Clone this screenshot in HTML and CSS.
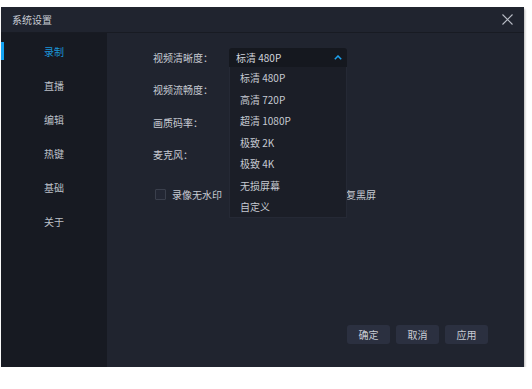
FILE: index.html
```html
<!DOCTYPE html>
<html lang="zh">
<head>
<meta charset="utf-8">
<link rel="stylesheet" href="styles.css">
</head>
<body>
<div class="dialog">
  <div class="titlebar">
    <span class="title">系统设置</span>
    <span class="close">
      <svg width="11" height="11" viewBox="0 0 11 11"><path d="M0.5 0.5 L10.5 10.5 M10.5 0.5 L0.5 10.5" stroke="#b9bdc6" stroke-width="1.1" fill="none"/></svg>
    </span>
  </div>
  <div class="content">
    <nav class="sidebar">
      <div class="nav-item active">录制</div>
      <div class="nav-item">直播</div>
      <div class="nav-item">编辑</div>
      <div class="nav-item">热键</div>
      <div class="nav-item">基础</div>
      <div class="nav-item">关于</div>
    </nav>
    <main class="main">
      <div class="form">
        <div class="row">
          <span class="label">视频清晰度：</span>
          <div class="select-wrap">
            <div class="select">
              <span>标清 480P</span>
              <svg class="chev" width="8" height="5" viewBox="0 0 8 5"><path d="M0.8 4.2 L4 1 L7.2 4.2" stroke="#1ea2ee" stroke-width="1.5" fill="none"/></svg>
            </div>
            <ul class="menu">
              <li>标清 480P</li>
              <li>高清 720P</li>
              <li>超清 1080P</li>
              <li>极致 2K</li>
              <li>极致 4K</li>
              <li>无损屏幕</li>
              <li>自定义</li>
            </ul>
          </div>
        </div>
        <div class="row"><span class="label">视频流畅度：</span></div>
        <div class="row"><span class="label">画质码率：</span></div>
        <div class="row"><span class="label">麦克风：</span></div>
        <div class="checks">
          <label class="check"><span class="box"></span>录像无水印</label>
          <label class="check second"><span class="box"></span>修复黑屏</label>
        </div>
      </div>
      <div class="actions">
        <button class="btn">确定</button>
        <button class="btn">取消</button>
        <button class="btn">应用</button>
      </div>
    </main>
  </div>
</div>
</body>
</html>
```
FILE: styles.css
```css
html, body {
  margin: 0;
  padding: 0;
  background: #ffffff;
}
body {
  font-family: "Noto Sans CJK SC", "Noto Sans", sans-serif;
  font-size: 10px;
  color: #c6cad2;
}
.dialog {
  margin: 7px 0 0 1px;
  width: 523px;
  height: 360px;
  display: flex;
  flex-direction: column;
  background: #20242f;
  box-shadow: 1px 2px 2px rgba(0, 0, 0, 0.28);
}
.titlebar {
  height: 25px;
  flex: none;
  display: flex;
  align-items: center;
  justify-content: space-between;
  padding: 0 10px 0 11px;
  background: #20242f;
  border-bottom: 1px solid #181b23;
}
.title {
  color: #c8ccd4;
  font-size: 10px;
}
.close {
  display: flex;
  margin-right: 1px;
}
.content {
  flex: 1;
  display: flex;
  min-height: 0;
}
.sidebar {
  width: 106px;
  flex: none;
  background: #171a22;
  padding-top: 1px;
}
.nav-item {
  position: relative;
  height: 34px;
  display: flex;
  align-items: center;
  justify-content: center;
  color: #bcc0c8;
}
.nav-item.active {
  color: #1c95d8;
}
.nav-item.active::before {
  content: "";
  position: absolute;
  left: 0;
  top: 8px;
  width: 3px;
  height: 18px;
  background: #13a3f2;
}
.main {
  flex: 1;
  display: flex;
  flex-direction: column;
  justify-content: space-between;
  padding: 8px 36px 23px 46px;
}
.form {
  display: flex;
  flex-direction: column;
}
.row {
  height: 32.5px;
  display: flex;
  align-items: center;
}
.label {
  width: 76px;
  flex: none;
  color: #c6cad2;
}
.select-wrap {
  position: relative;
  width: 118px;
}
.select {
  height: 19px;
  display: flex;
  align-items: center;
  justify-content: space-between;
  padding: 0 5px 0 7px;
  background: #15181f;
  border-radius: 3px 3px 0 0;
  color: #d0d3da;
}
.chev {
  display: block;
}
.menu {
  position: absolute;
  left: 0;
  top: 19px;
  width: 118px;
  box-sizing: border-box;
  margin: 0;
  padding: 0;
  list-style: none;
  background: #1b1e27;
  border: 1px solid #252935;
  border-top: none;
  z-index: 2;
}
.menu li {
  height: 21.5px;
  display: flex;
  align-items: center;
  padding-left: 10px;
  color: #c6cad2;
}
.checks {
  margin-top: 13px;
  height: 20px;
  display: flex;
  align-items: center;
  padding-left: 2px;
}
.check {
  display: flex;
  align-items: center;
  gap: 6px;
  color: #c6cad2;
}
.check.second {
  margin-left: 97px;
}
.box {
  width: 9px;
  height: 9px;
  border: 1px solid #3a3f4c;
  background: #232734;
  border-radius: 1px;
}
.actions {
  display: flex;
  justify-content: flex-end;
  gap: 6px;
}
.btn {
  width: 43px;
  height: 19px;
  border: none;
  border-radius: 3px;
  background: #2b3040;
  color: #c8ccd4;
  font-family: "Noto Sans CJK SC", "Noto Sans", sans-serif;
  font-size: 10px;
  padding: 0;
}
```
